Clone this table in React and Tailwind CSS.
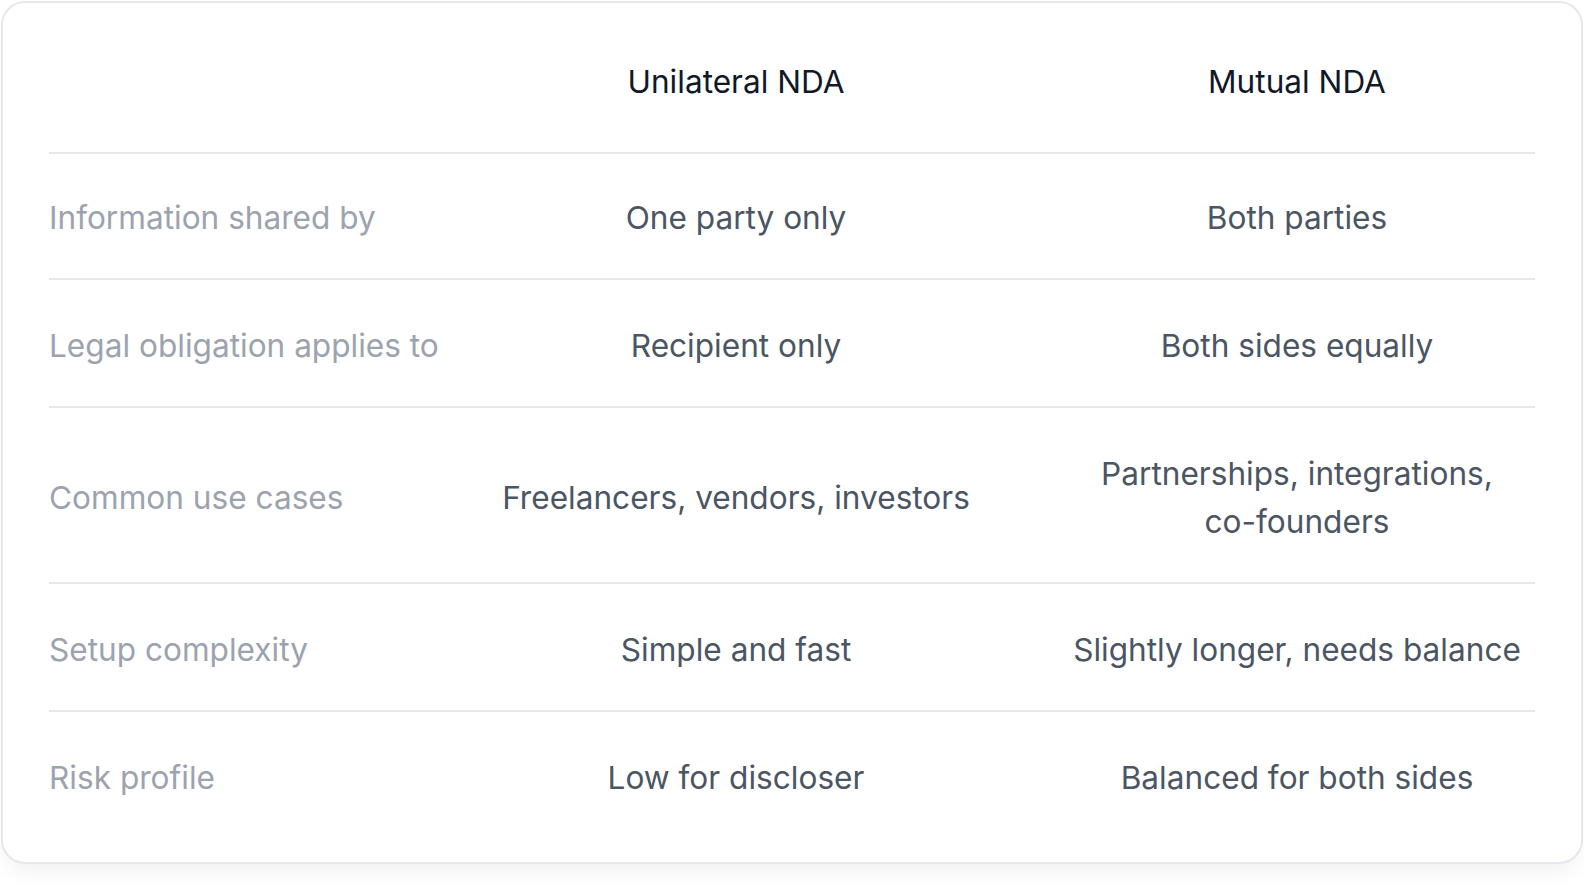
const rows = [
  { label: 'Information shared by', uni: 'One party only', mutual: 'Both parties' },
  { label: 'Legal obligation applies to', uni: 'Recipient only', mutual: 'Both sides equally' },
  {
    label: 'Common use cases',
    uni: 'Freelancers, vendors, investors',
    mutual: <>Partnerships, integrations, <span className="whitespace-nowrap">co-founders</span></>,
  },
  { label: 'Setup complexity', uni: 'Simple and fast', mutual: 'Slightly longer, needs balance' },
  { label: 'Risk profile', uni: 'Low for discloser', mutual: 'Balanced for both sides' },
]

export default function App() {
  return (
    <div className="w-[1584px] h-[890px] bg-white font-['Inter',sans-serif]">
      <div className="m-px rounded-[24px] border-2 border-[#e5e7eb] bg-white px-[46px] pt-[46px] pb-[24px] shadow-[0_12px_24px_-8px_rgba(17,24,39,0.08)]">
        {/* Header */}
        <div className="grid grid-cols-[366px_642px_480px] border-b-2 border-[#e5e7eb] pt-[9px] pb-[46px]">
          <div />
          <div className="text-center text-[31.6px] leading-[48px] text-[#111827]">Unilateral NDA</div>
          <div className="text-center text-[31.6px] leading-[48px] text-[#111827]">Mutual NDA</div>
        </div>

        {rows.map((r, i) => (
          <div
            key={r.label}
            className={`grid grid-cols-[366px_642px_480px] items-center pb-[36px] ${i === 0 ? 'pt-[40px]' : 'pt-[42px]'} ${i < rows.length - 1 ? 'border-b-2 border-[#e5e7eb]' : ''}`}
          >
            <div className="whitespace-nowrap text-[31.6px] leading-[48px] text-[#9ca3af]">{r.label}</div>
            <div className="px-2 text-center text-[31.6px] leading-[48px] text-[#4b5563]">{r.uni}</div>
            <div className="px-2 text-center text-[31.6px] leading-[48px] text-[#4b5563]">{r.mutual}</div>
          </div>
        ))}
      </div>
    </div>
  )
}
